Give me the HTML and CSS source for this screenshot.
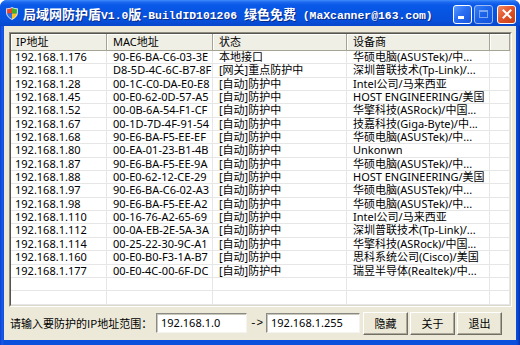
FILE: index.html
```html
<!DOCTYPE html>
<html lang="zh-CN">
<head>
  <meta charset="UTF-8" />
  <title>局域网防护盾</title>
  <link rel="stylesheet" href="styles.css">
</head>
<body>
  <div class="window">
    <!-- Title bar -->
    <div class="titlebar">
      <svg class="app-icon" width="12" height="13" viewBox="0 0 12 13">
        <defs>
          <clipPath id="shield">
            <path d="M6 0.5 C4 1.6 2.2 1.8 0.6 1.6 L0.6 6 C0.6 9 3 11 6 12.5 C9 11 11.4 9 11.4 6 L11.4 1.6 C9.8 1.8 8 1.6 6 0.5 Z" />
          </clipPath>
        </defs>
        <g clip-path="url(#shield)">
          <rect x="0" y="0" width="6" height="6.5" fill="#e8452c" />
          <rect x="6" y="0" width="6" height="6.5" fill="#3fae2a" />
          <rect x="0" y="6.5" width="6" height="7" fill="#2f6fe8" />
          <rect x="6" y="6.5" width="6" height="7" fill="#f7c31b" />
        </g>
        <path d="M6 0.5 C4 1.6 2.2 1.8 0.6 1.6 L0.6 6 C0.6 9 3 11 6 12.5 C9 11 11.4 9 11.4 6 L11.4 1.6 C9.8 1.8 8 1.6 6 0.5 Z" fill="none" stroke="#fff" stroke-width="0.8" />
      </svg>
      <span class="title"><span class="zh">局域网防护盾</span>V1.0<span class="zh">版</span>-BuildID101206 <span class="zh">绿色免费</span> (MaXcanner@163.com)</span>
      <div class="controls">
        <div class="ctl ctl-min"><span class="bar"></span></div>
        <div class="ctl ctl-max"><span class="box"></span></div>
        <div class="ctl ctl-close">
          <svg width="10" height="10" viewBox="0 0 10 10"><path d="M1.5 1.5 L8.5 8.5 M8.5 1.5 L1.5 8.5" stroke="#fff" stroke-width="2" stroke-linecap="square" /></svg>
        </div>
      </div>
    </div>

    <!-- Client area -->
    <div class="client">
      <div class="list">
        <div class="list-inner">
          <div class="head">
            <div class="hcell">IP地址</div>
            <div class="hcell">MAC地址</div>
            <div class="hcell">状态</div>
            <div class="hcell">设备商</div>
            <div class="hcell"></div>
          </div>
          <div class="rows">
            <div class="row"><div>192.168.1.176</div><div>90-E6-BA-C6-03-3E</div><div>本地接口</div><div>华硕电脑(ASUSTek)/中...</div><div></div></div>
            <div class="row"><div>192.168.1.1</div><div>D8-5D-4C-6C-B7-8F</div><div>[网关]重点防护中</div><div>深圳普联技术(Tp-Link)/...</div><div></div></div>
            <div class="row"><div>192.168.1.28</div><div>00-1C-C0-DA-E0-E8</div><div>[自动]防护中</div><div>Intel公司/马来西亚</div><div></div></div>
            <div class="row"><div>192.168.1.45</div><div>00-E0-62-0D-57-A5</div><div>[自动]防护中</div><div>HOST ENGINEERING/美国</div><div></div></div>
            <div class="row"><div>192.168.1.52</div><div>00-0B-6A-54-F1-CF</div><div>[自动]防护中</div><div>华擎科技(ASRock)/中国...</div><div></div></div>
            <div class="row"><div>192.168.1.67</div><div>00-1D-7D-4F-91-54</div><div>[自动]防护中</div><div>技嘉科技(Giga-Byte)/中...</div><div></div></div>
            <div class="row"><div>192.168.1.68</div><div>90-E6-BA-F5-EE-EF</div><div>[自动]防护中</div><div>华硕电脑(ASUSTek)/中...</div><div></div></div>
            <div class="row"><div>192.168.1.80</div><div>00-EA-01-23-B1-4B</div><div>[自动]防护中</div><div>Unkonwn</div><div></div></div>
            <div class="row"><div>192.168.1.87</div><div>90-E6-BA-F5-EE-9A</div><div>[自动]防护中</div><div>华硕电脑(ASUSTek)/中...</div><div></div></div>
            <div class="row"><div>192.168.1.88</div><div>00-E0-62-12-CE-29</div><div>[自动]防护中</div><div>HOST ENGINEERING/美国</div><div></div></div>
            <div class="row"><div>192.168.1.97</div><div>90-E6-BA-C6-02-A3</div><div>[自动]防护中</div><div>华硕电脑(ASUSTek)/中...</div><div></div></div>
            <div class="row"><div>192.168.1.98</div><div>90-E6-BA-F5-EE-A2</div><div>[自动]防护中</div><div>华硕电脑(ASUSTek)/中...</div><div></div></div>
            <div class="row"><div>192.168.1.110</div><div>00-16-76-A2-65-69</div><div>[自动]防护中</div><div>Intel公司/马来西亚</div><div></div></div>
            <div class="row"><div>192.168.1.112</div><div>00-0A-EB-2E-5A-3A</div><div>[自动]防护中</div><div>深圳普联技术(Tp-Link)/...</div><div></div></div>
            <div class="row"><div>192.168.1.114</div><div>00-25-22-30-9C-A1</div><div>[自动]防护中</div><div>华擎科技(ASRock)/中国...</div><div></div></div>
            <div class="row"><div>192.168.1.160</div><div>00-E0-B0-F3-1A-B7</div><div>[自动]防护中</div><div>思科系统公司(Cisco)/美国</div><div></div></div>
            <div class="row"><div>192.168.1.177</div><div>00-E0-4C-00-6F-DC</div><div>[自动]防护中</div><div>瑞昱半导体(Realtek)/中...</div><div></div></div>
            <div class="row"><div></div><div></div><div></div><div></div><div></div></div>
            <div class="row"><div></div><div></div><div></div><div></div><div></div></div>
            <div class="row"><div></div><div></div><div></div><div></div><div></div></div>
          </div>
        </div>
      </div>

      <!-- Range input -->
      <div class="footer">
        <span class="range-label">请输入要防护的IP地址范围：</span>
        <div class="textbox tb-from">192.168.1.0</div>
        <span class="arrow">-&gt;</span>
        <div class="textbox tb-to">192.168.1.255</div>
        <button class="btn">隐藏</button>
        <button class="btn">关于</button>
        <button class="btn">退出</button>
      </div>
    </div>
  </div>
</body>
</html>
```

FILE: styles.css
```css
* {
  box-sizing: border-box;
  margin: 0;
  padding: 0;
}

body {
  width: 520px;
  height: 345px;
  overflow: hidden;
  background: #fff;
  font-family: "Noto Sans", "Noto Sans CJK SC", sans-serif;
  font-size: 11px;
  color: #000;
}

.window {
  width: 520px;
  height: 345px;
  display: flex;
  flex-direction: column;
  padding: 0 4px 5px;
  background: linear-gradient(90deg, #0a3fd0 0, #1a5ae6 2px, #0b4fdd 4px, #0b4fdd 516px, #0a44d2 518px, #07309e 520px);
  border-radius: 7px 7px 0 0;
}

/* Title bar */
.titlebar {
  height: 26px;
  flex: none;
  margin: 0 -4px;
  padding: 0 4px 0 6px;
  display: flex;
  align-items: center;
  border-radius: 7px 7px 0 0;
  background: linear-gradient(#3f8dfa 0, #1e6af0 2px, #0a58e8 5px, #0655e2 12px, #0751dc 20px, #0847cc 26px);
}

.app-icon {
  flex: none;
  margin-right: 5px;
  margin-top: 1px;
}

.title {
  font-family: "Liberation Mono", monospace;
  font-weight: bold;
  font-size: 11.4px;
  color: #fff;
  white-space: nowrap;
  text-shadow: 1px 1px 0 #0a2a8a;
}

.title .zh {
  font-family: "Noto Sans CJK SC", sans-serif;
  font-size: 13px;
  font-weight: bold;
}

.controls {
  margin-left: auto;
  display: flex;
  gap: 2px;
  margin-top: 2px;
}

.ctl {
  width: 19px;
  height: 19px;
  border: 1px solid #fff;
  border-radius: 3px;
  display: flex;
  align-items: center;
  justify-content: center;
  position: relative;
  background: linear-gradient(135deg, #5b9bff 0, #2a6ef2 45%, #1856e0 100%);
}

.ctl-min .bar {
  position: absolute;
  left: 4px;
  bottom: 4px;
  width: 6px;
  height: 3px;
  background: #fff;
}

.ctl-max {
  opacity: 0.6;
}

.ctl-max .box {
  width: 9px;
  height: 8px;
  border: 1px solid #c8dcff;
  border-top-width: 2px;
}

.ctl-close {
  margin-left: 2px;
  background: linear-gradient(135deg, #f28a63 0, #e2552c 45%, #c63d14 100%);
}

/* Client area */
.client {
  flex: 1;
  background: #ece9d8;
  padding: 6px 4px 0 5px;
  display: flex;
  flex-direction: column;
}

.list {
  height: 275px;
  border: 1px solid;
  border-color: #8d8b80 #fff #fff #8d8b80;
}

.list-inner {
  height: 100%;
  border: 1px solid;
  border-color: #55544d #dcd9c8 #dcd9c8 #55544d;
  background: #fff;
  overflow: hidden;
}

.head,
.row {
  display: grid;
  grid-template-columns: 96px 106px 134px 143px 1fr;
}

.head {
  height: 17px;
  background: #f0efe6;
  border-bottom: 1px solid #a5a393;
}

.hcell {
  border-right: 1px solid #a5a393;
  box-shadow: inset 1px 1px 0 #fff;
  padding-left: 6px;
  line-height: 16px;
  white-space: nowrap;
}

.hcell:first-child {
  padding-left: 5px;
}

.row {
  height: 13.35px;
  border-bottom: 1px solid #e6e6e6;
}

.row div {
  border-right: 1px solid #e6e6e6;
  padding-left: 6px;
  line-height: 12.5px;
  white-space: nowrap;
}

.row div:first-child {
  padding-left: 4px;
}

/* Footer controls */
.footer {
  flex: 1;
  display: flex;
  align-items: center;
  padding-left: 1px;
  padding-bottom: 1px;
}

.range-label {
  width: 146px;
  font-family: "Noto Sans CJK SC", sans-serif;
  white-space: nowrap;
}

.textbox {
  height: 20px;
  background: #fff;
  border: 1px solid;
  border-color: #8a8a84 #f4f3ee #f4f3ee #8a8a84;
  box-shadow: inset 1px 1px 0 #c9c7ba;
  padding-left: 4px;
  line-height: 17px;
  font-size: 11px;
}

.tb-from {
  width: 91px;
}

.tb-to {
  width: 94px;
}

.arrow {
  width: 19px;
  text-align: center;
  font-family: "Liberation Mono", monospace;
  font-size: 11px;
}

.btn {
  width: 45px;
  height: 23px;
  margin-left: 2px;
  background: #ece9d8;
  border: 1px solid;
  border-color: #fff #716f64 #716f64 #fff;
  box-shadow: inset -1px -1px 0 #aca899;
  font-family: "Noto Sans CJK SC", sans-serif;
  font-size: 11px;
  color: #000;
}

.btn:first-of-type {
  margin-left: 3px;
}
```
